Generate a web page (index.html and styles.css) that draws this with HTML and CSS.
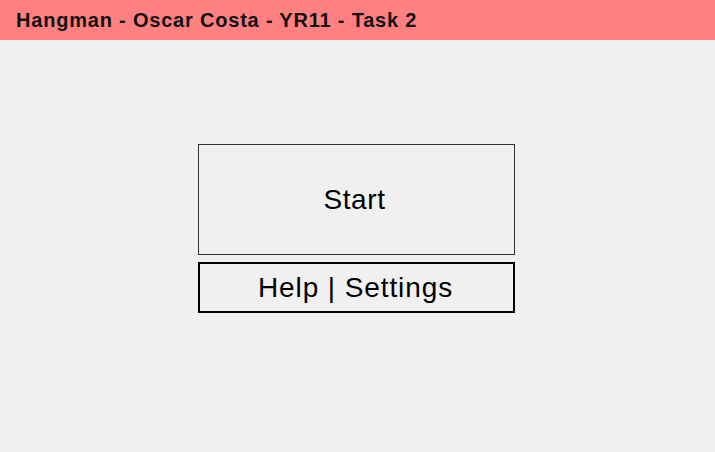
FILE: index.html
```html
<!DOCTYPE html>
<html lang="en">
<head>
    <meta charset="UTF-8">
    <meta name="viewport" content="width=device-width, initial-scale=1.0">
    <title>Hangman</title>
    <link rel="stylesheet" href="styles.css">
</head>
<body>

    <!-- Title bar -->
    <header class="title-bar">
        <span class="title-text">Hangman - Oscar Costa - YR11 - Task 2</span>
    </header>

    <main class="menu">
        <button class="btn btn-start">Start</button>
        <button class="btn btn-help">Help | Settings</button>
    </main>

</body>
</html>
```

FILE: styles.css
```css
body {
    margin: 0;
    background-color: #f0f0f0;
    font-family: "Liberation Sans", Arial, sans-serif;
    color: #000;
}

.title-bar {
    height: 40px;
    background-color: #ff8080;
    display: flex;
    align-items: center;
    padding-left: 16px;
}

.title-text {
    font-weight: bold;
    font-size: 20px;
    letter-spacing: 0.8px;
    color: #111;
}

.menu {
    display: flex;
    flex-direction: column;
    gap: 7px;
    padding: 104px 0 0 198px;
}

.btn {
    width: 317px;
    background-color: #f0f0f0;
    font-family: "Liberation Sans", Arial, sans-serif;
    font-size: 28px;
    color: #000;
    padding: 0;
    cursor: pointer;
}

.btn-start {
    height: 111px;
    border: 1px solid #333;
    letter-spacing: 0.6px;
    padding-right: 4px;
}

.btn-help {
    height: 51px;
    border: 2px solid #000;
    letter-spacing: 0.9px;
    padding-right: 2px;
}
```
